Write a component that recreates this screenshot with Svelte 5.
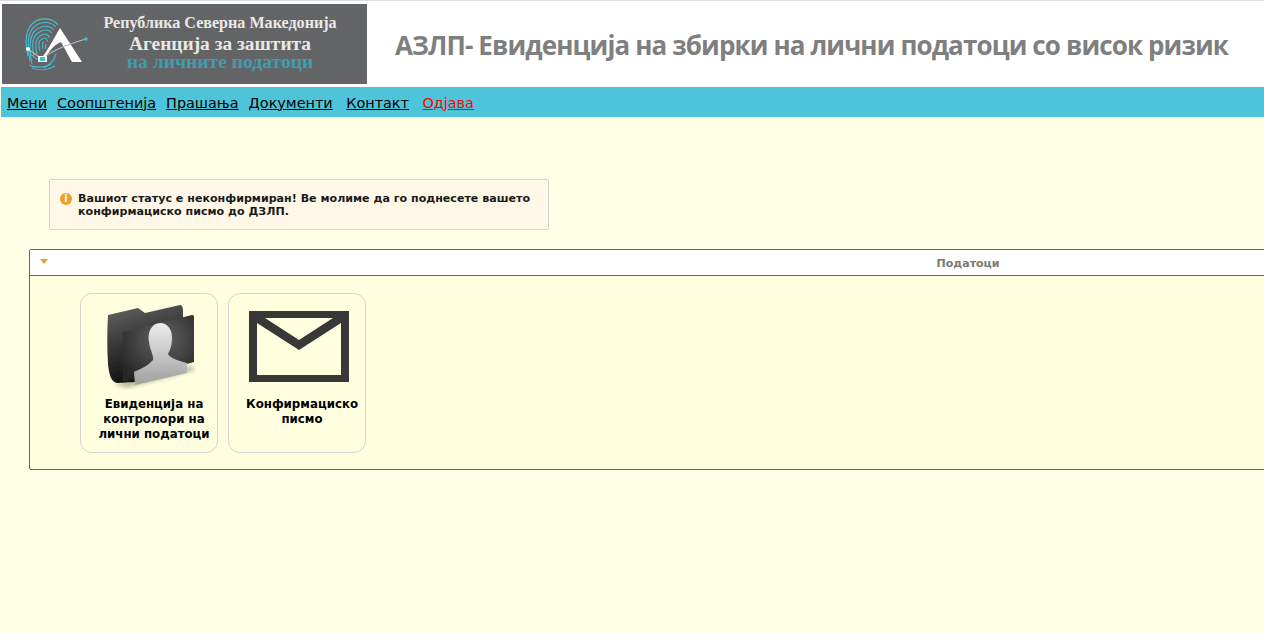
<script lang="ts">
	const navLinks = [
		{ label: 'Мени', cls: '' },
		{ label: 'Соопштенија', cls: '' },
		{ label: 'Прашања', cls: '' },
		{ label: 'Документи', cls: '' },
		{ label: 'Контакт', cls: 'gap' },
		{ label: 'Одјава', cls: 'gap logout' }
	];
</script>

<div class="page">
	<header class="top">
		<div class="logo">
			<svg class="mark" width="64" height="54" viewBox="0 0 64 54" aria-hidden="true">
				<g fill="none" stroke="#45bdd3" stroke-width="1.1">
					<path d="M3 38C0 28 0 13 7 6C14 -1 27 -1 33 7" />
					<path d="M5 43C2 31 2 15 9 9C15 3 26 3 31 9" />
					<path d="M7 46C4 32 4 17 11 12C17 7 25 7 29 12" />
					<path d="M9 38C7 29 7 19 13 15C18 11 24 11 27 15" />
					<path d="M12 36C10 28 10 21 15 18C19 15 23 16 25 20" />
					<path d="M15 33C13 27 13 23 17 21C20 19 22 20 23 24" />
					<path d="M18 31C17 27 17 25 19 24" />
					<path d="M21 31C20 28 20 27 21 26" />
					<path d="M4 47C10 50 19 50 26 46" />
					<path d="M7 50C14 53 23 52 30 48" />
					<path d="M3 32C7 39 13 43 21 43" />
					<path d="M31 36C29 43 25 47 19 50" />
				</g>
				<path d="M35 10L57 44H47L36 24C28 27 22 36 19 43L15 42C22 34 28 22 35 10Z" fill="#fff" />
				<path d="M3 31L17 41C26 33 40 27 61 21" fill="none" stroke="#b7babc" stroke-width="1.3" />
				<circle cx="3" cy="31" r="2" fill="#fff" />
				<circle cx="61" cy="21" r="1.8" fill="#45bdd3" />
				<rect x="13" y="38" width="9" height="6" fill="#fff" />
				<rect x="15" y="39" width="5" height="4" fill="#45bdd3" />
			</svg>
			<div class="logo-text">
				<div class="l1">Република Северна Македонија</div>
				<div class="l2">Агенција за заштита</div>
				<div class="l3">на личните податоци</div>
			</div>
		</div>
		<h1>АЗЛП- Евиденција на збирки на лични податоци со висок ризик</h1>
	</header>

	<nav>
		{#each navLinks as link}
			<a href="#top" class={link.cls}>{link.label}</a>
		{/each}
	</nav>

	<main>
		<div class="notice">
			<span class="info">i</span>
			<p>Вашиот статус е неконфирмиран! Ве молиме да го поднесете вашето конфирмациско писмо до ДЗЛП.</p>
		</div>

		<section class="panel">
			<div class="panel-head">
				<span class="caret"></span>
				<span class="panel-title">Податоци</span>
			</div>
			<div class="panel-body">
				<a class="tile" href="#top">
					<svg class="tile-icon" width="90" height="88" viewBox="-1 -2 90 88" aria-hidden="true">
						<defs>
							<linearGradient id="back" x1="0" y1="0" x2="0.3" y2="1">
								<stop offset="0" stop-color="#666" />
								<stop offset="0.5" stop-color="#383838" />
								<stop offset="1" stop-color="#111" />
							</linearGradient>
							<radialGradient id="front" cx="0.55" cy="0.35" r="0.7">
								<stop offset="0" stop-color="#636363" />
								<stop offset="1" stop-color="#262626" />
							</radialGradient>
							<linearGradient id="person" x1="0" y1="0" x2="0" y2="1">
								<stop offset="0" stop-color="#ececec" />
								<stop offset="1" stop-color="#a0a0a0" />
							</linearGradient>
							<filter id="soft" x="-20%" y="-20%" width="140%" height="140%">
								<feGaussianBlur stdDeviation="0.6" />
							</filter>
							<filter id="shade" x="-30%" y="-30%" width="160%" height="160%">
								<feGaussianBlur stdDeviation="2" />
							</filter>
						</defs>
						<path d="M6 80L84 62L88 66L20 84Z" fill="#8d8d70" opacity="0.6" filter="url(#shade)" />
						<g filter="url(#soft)">
							<path d="M1 11L31 4L38 9L73 1C75 1 76 3 76 8L76 20L30 78C24 78 14 79 10 79C4 78 2 70 1 60C0 44 0 28 1 11Z" fill="url(#back)" />
							<path d="M16 28L85 11C87 11 87 12 87 14L87 58L16 78Z" fill="url(#front)" />
							<path d="M53 19C60 19 65 25 65 33C65 42 63 46 61 50C63 54 70 56 80 59L80 69L28 81L27 68C33 65 41 62 46 56C47 52 43 46 42 38C40 28 45 19 53 19Z" fill="url(#person)" />
						</g>
					</svg>
					<span>Евиденција на контролори на лични податоци</span>
				</a>
				<a class="tile" href="#top">
					<svg class="tile-icon" width="100" height="72" viewBox="0 -1 100 72" aria-hidden="true">
						<path fill-rule="evenodd" d="M0 0H100V71H0Z M16 7H84L50 29Z M8 12L50 39L92 12V64H8Z" fill="#383838" />
					</svg>
					<span>Конфирмациско писмо</span>
				</a>
			</div>
		</section>
	</main>
</div>

<style>
	:global(body) {
		margin: 0;
		background: #ffffe6;
		overflow: hidden;
	}

	.page {
		height: 633px;
		overflow: hidden;
		background: #ffffe6;
		font-family: 'DejaVu Sans', Verdana, sans-serif;
	}

	.top {
		display: flex;
		align-items: center;
		height: 82px;
		padding: 2px 0 2px 2px;
		background: #fff;
		border-top: 1px solid #dddde0;
	}

	.logo {
		display: flex;
		align-items: center;
		width: 365px;
		height: 80px;
		flex: none;
		background: #636466;
	}

	.mark {
		margin: 2px 0 0 23px;
		flex: none;
	}

	.logo-text {
		margin: 0 0 4px 6px;
		width: 250px;
		font-family: 'Liberation Serif', serif;
		font-weight: bold;
		text-align: center;
		color: #e9e9e6;
	}

	.l1 {
		font-size: 16.1px;
		line-height: 18px;
	}

	.l2 {
		font-size: 19.4px;
		line-height: 19px;
		margin-top: 2px;
	}

	.l3 {
		font-size: 19.6px;
		line-height: 18px;
		color: #3e9db1;
	}

	h1 {
		margin: 2px 0 0 28px;
		font-family: 'Open Sans', sans-serif;
		font-size: 26px;
		font-weight: 700;
		letter-spacing: -0.88px;
		color: #7f7f7f;
		white-space: nowrap;
	}

	nav {
		display: flex;
		align-items: center;
		box-sizing: border-box;
		height: 30px;
		margin-left: 1px;
		padding: 1px 0 0 6px;
		gap: 10px;
		background: #4dc4d9;
		font-size: 14.4px;
	}

	nav a {
		color: #000;
	}

	nav a.gap {
		margin-left: 3.5px;
	}

	nav a.logout {
		color: #f00;
	}

	main {
		padding: 62px 0 0 29px;
	}

	.notice {
		display: flex;
		align-items: flex-start;
		gap: 6px;
		box-sizing: border-box;
		width: 500px;
		height: 51px;
		margin-left: 20px;
		padding: 12px 10px;
		background: #fff8e8;
		border: 1px solid #d6d3cc;
		border-radius: 2px;
	}

	.info {
		flex: none;
		width: 12px;
		height: 12px;
		margin-top: 1px;
		border-radius: 50%;
		background: #f0a124;
		color: #fff;
		font-size: 10px;
		font-weight: bold;
		line-height: 12px;
		text-align: center;
	}

	.notice p {
		margin: 0;
		font-size: 11.08px;
		font-weight: bold;
		line-height: 13px;
		color: #1a1a1a;
	}

	.panel {
		box-sizing: border-box;
		width: 1878px;
		height: 221px;
		margin-top: 19px;
		border: 1px solid #6b6751;
		border-radius: 2px;
		background: #ffffdf;
	}

	.panel-head {
		position: relative;
		height: 25px;
		background: #fff;
		border-bottom: 1px solid #6b6751;
		text-align: center;
		line-height: 24px;
	}

	.caret {
		position: absolute;
		left: 10px;
		top: 9px;
		border: 4px solid transparent;
		border-top: 5px solid #e8a028;
		border-bottom: 0;
	}

	.panel-title {
		font-size: 11px;
		font-weight: bold;
		color: #7a7a72;
	}

	.panel-body {
		display: flex;
		gap: 10px;
		padding: 17px 0 0 50px;
	}

	.tile {
		display: flex;
		flex-direction: column;
		align-items: center;
		box-sizing: border-box;
		width: 138px;
		height: 160px;
		padding-top: 8px;
		border: 1px solid #d3d3cf;
		border-radius: 12px;
		color: #000;
		font-size: 11.8px;
		font-weight: bold;
		line-height: 15px;
		text-align: center;
		text-decoration: none;
	}

	.tile-icon {
		height: 88px;
		flex: none;
		margin-left: 4px;
	}

	.tile span {
		margin-top: 7px;
		padding-left: 10px;
	}
</style>
